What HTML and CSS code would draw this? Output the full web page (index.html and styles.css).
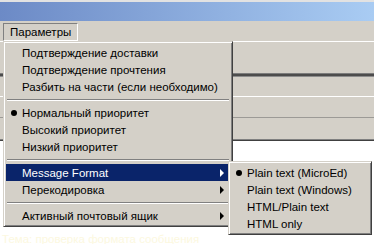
FILE: index.html
```html
<!DOCTYPE html>
<html lang="ru">
<head>
    <meta charset="UTF-8">
    <meta name="viewport" content="width=device-width, initial-scale=1.0">
    <title>Параметры</title>
    <link rel="stylesheet" href="styles.css">
</head>

<body>
    <div class="window">
        <div class="titlebar"></div>
        <div class="menubar">
            <span class="menubar-item pressed">Параметры</span>
        </div>
        <div class="toolbar">
            <div class="row row-top"></div>
            <div class="grip"></div>
            <div class="row row-a"></div>
            <div class="row row-b"></div>
            <div class="row row-c"></div>
        </div>
        <div class="editor">
            <p class="faint">Тема: проверка формата сообщения</p>
        </div>
    </div>

    <ul class="menu main-menu">
        <li class="item"><span class="mark"></span>Подтверждение доставки</li>
        <li class="item"><span class="mark"></span>Подтверждение прочтения</li>
        <li class="item"><span class="mark"></span>Разбить на части (если необходимо)</li>
        <li class="separator"></li>
        <li class="item"><span class="mark"><i class="bullet"></i></span>Нормальный приоритет</li>
        <li class="item"><span class="mark"></span>Высокий приоритет</li>
        <li class="item"><span class="mark"></span>Низкий приоритет</li>
        <li class="separator"></li>
        <li class="item active"><span class="mark"></span>Message Format<span class="arrow"></span></li>
        <li class="item"><span class="mark"></span>Перекодировка<span class="arrow"></span></li>
        <li class="separator"></li>
        <li class="item"><span class="mark"></span>Активный почтовый ящик<span class="arrow"></span></li>
    </ul>

    <ul class="menu sub-menu">
        <li class="item"><span class="mark"><i class="bullet"></i></span>Plain text (MicroEd)</li>
        <li class="item"><span class="mark"></span>Plain text (Windows)</li>
        <li class="item"><span class="mark"></span>HTML/Plain text</li>
        <li class="item"><span class="mark"></span>HTML only</li>
    </ul>
</body>
</html>
```

FILE: styles.css
```css
* {
    box-sizing: border-box;
}
body {
    margin: 0;
    width: 374px;
    height: 244px;
    overflow: hidden;
    position: relative;
    background: #fff;
    font-family: "Liberation Sans", Arial, sans-serif;
    font-size: 11.5px;
    color: #000;
}
.titlebar {
    height: 21px;
    border-top: 2px solid #e2e2e2;
    background: linear-gradient(to right, #6c8ac6, #a9ccf3);
}
.menubar {
    height: 20px;
    background: #d4d0c8;
    padding: 2px 0 0 3px;
}
.menubar-item {
    display: inline-block;
    height: 18px;
    line-height: 16px;
    padding: 0 6px;
    border: 1px solid transparent;
}
.menubar-item.pressed {
    border-color: #808080 #fff #fff #808080;
}
.toolbar {
    background: #d4d0c8;
    border-top: 1px solid #fff;
}
.row-top {
    height: 31px;
}
.grip {
    height: 4px;
    border-top: 1px solid #7c7c7c;
    border-bottom: 1px solid #8c8c8c;
    background: #4c4c4c;
}
.row-a {
    height: 20px;
    border-bottom: 1px solid #fff;
}
.row-b {
    height: 21px;
    border-bottom: 1px solid #9c9a96;
}
.row-c {
    height: 23px;
    border-bottom: 1px solid #404040;
    box-shadow: inset 0 -1px #808080;
}
.editor {
    padding: 91px 0 0 2px;
}
.faint {
    margin: 0;
    line-height: 14px;
    color: #fcf8e0;
}

/* popup menus */
.menu {
    position: absolute;
    margin: 0;
    padding: 2px;
    list-style: none;
    background: #d4d0c8;
    border: 1px solid;
    border-color: #d4d0c8 #404040 #404040 #d4d0c8;
    box-shadow: inset 1px 1px #fff, inset -1px -1px #808080;
}
.main-menu {
    left: 3px;
    top: 41px;
    width: 230px;
}
.sub-menu {
    left: 228px;
    top: 161px;
    width: 144px;
}
.item {
    display: flex;
    align-items: center;
    height: 17px;
    padding-right: 6px;
    white-space: nowrap;
}
.item.active {
    background: #0a246a;
    color: #fff;
}
.mark {
    width: 16px;
    flex: none;
    display: flex;
    justify-content: center;
    align-items: center;
}
.main-menu .mark {
    justify-content: flex-start;
    padding-left: 5px;
}
.bullet {
    display: block;
    width: 6px;
    height: 6px;
    border-radius: 50%;
    background: #000;
}
.arrow {
    margin-left: auto;
    width: 0;
    height: 0;
    border-left: 4px solid #000;
    border-top: 4px solid transparent;
    border-bottom: 4px solid transparent;
}
.item.active .arrow {
    border-left-color: #fff;
}
.separator {
    height: 9px;
    margin: 0 1px;
    padding-top: 4px;
}
.separator::before {
    content: "";
    display: block;
    height: 1px;
    background: #808080;
    box-shadow: 0 1px #fff;
}
```
